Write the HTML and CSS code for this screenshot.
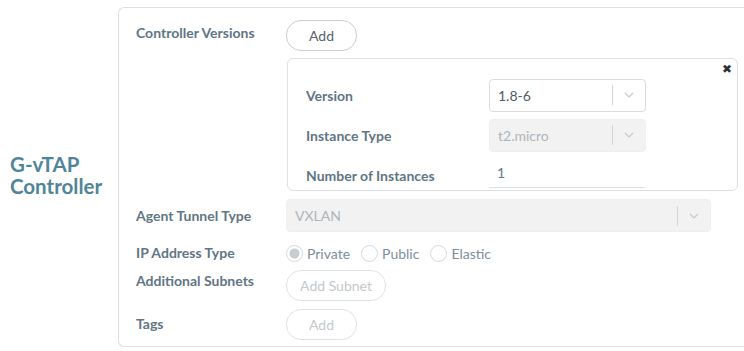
FILE: index.html
```html
<!DOCTYPE html>
<html>
<head>
<meta charset="utf-8">
<link rel="stylesheet" href="styles.css">
</head>
<body>
<div class="page">
  <div class="side">
    <h2 class="title">G-vTAP<br>Controller</h2>
  </div>
  <div class="card">
    <div class="row row-cv">
      <div class="label">Controller Versions</div>
      <div class="value">
        <button class="pill pill-add">Add</button>
        <div class="inner">
          <span class="close">&#x2716;</span>
          <div class="irow">
            <div class="ilabel">Version</div>
            <div class="select">
              <span class="sval">1.8-6</span>
              <span class="sep"></span>
              <svg class="chev" width="10" height="6" viewBox="0 0 10 6"><path d="M1 1 L5 5 L9 1" fill="none" stroke="#c4c9cd" stroke-width="1.2"/></svg>
            </div>
          </div>
          <div class="irow">
            <div class="ilabel">Instance Type</div>
            <div class="select disabled">
              <span class="sval">t2.micro</span>
              <span class="sep"></span>
              <svg class="chev" width="10" height="6" viewBox="0 0 10 6"><path d="M1 1 L5 5 L9 1" fill="none" stroke="#c4c9cd" stroke-width="1.2"/></svg>
            </div>
          </div>
          <div class="irow">
            <div class="ilabel">Number of Instances</div>
            <div class="numinput">1</div>
          </div>
        </div>
      </div>
    </div>
    <div class="row row-att">
      <div class="label">Agent Tunnel Type</div>
      <div class="value">
        <div class="select disabled wide">
          <span class="sval">VXLAN</span>
          <span class="sep"></span>
          <svg class="chev" width="10" height="6" viewBox="0 0 10 6"><path d="M1 1 L5 5 L9 1" fill="none" stroke="#c4c9cd" stroke-width="1.2"/></svg>
        </div>
      </div>
    </div>
    <div class="row row-ip">
      <div class="label">IP Address Type</div>
      <div class="value radios">
        <span class="radio checked"></span><span class="rtext">Private</span>
        <span class="radio"></span><span class="rtext">Public</span>
        <span class="radio"></span><span class="rtext">Elastic</span>
      </div>
    </div>
    <div class="row row-sub">
      <div class="label">Additional Subnets</div>
      <div class="value"><button class="pill pill-dis pill-subnet">Add Subnet</button></div>
    </div>
    <div class="row row-tags">
      <div class="label">Tags</div>
      <div class="value"><button class="pill pill-dis pill-add">Add</button></div>
    </div>
  </div>
</div>
</body>
</html>
```

FILE: styles.css
```css
* { box-sizing: border-box; }
html, body { margin: 0; padding: 0; background: #fff; overflow: hidden; }
body { font-family: "Lato", "Open Sans", sans-serif; width: 744px; height: 351px; }
.page { display: flex; align-items: flex-start; width: 744px; }
.side { width: 118px; flex: none; height: 351px; display: flex; align-items: center; padding-left: 10px; }
.title { margin: 0; font-size: 20.5px; line-height: 22px; font-weight: 700; color: #4f8598; padding-bottom: 2px; }
.card {
  margin-top: 7px;
  width: 626px;
  flex: none;
  height: 340px;
  border: 1px solid #dedfe0;
  border-right: none;
  border-radius: 6px 0 0 6px;
  padding: 12px 0 0 17px;
}
.row { display: flex; align-items: flex-start; }
.label { width: 150px; flex: none; font-size: 14px; font-weight: 700; color: #617584; line-height: 18px; }
.value { flex: none; }
.row-cv .label { padding-top: 4px; }
.pill {
  display: block;
  border: 1px solid #c9cdd0;
  border-radius: 15px;
  background: #fff;
  font-family: inherit;
  font-size: 14px;
  color: #56636d;
  height: 31px;
  padding: 0;
}
.pill-add { width: 71px; }
.pill-subnet { width: 100px; }
.pill-dis { border-color: #dfe2e4; color: #c3c9cd; }
.inner {
  position: relative;
  margin-top: 7px;
  margin-left: 1px;
  width: 451px;
  height: 133px;
  border: 1px solid #dedfe0;
  border-radius: 6px;
  padding: 20px 0 0 18px;
}
.close { position: absolute; right: 5px; top: 3px; font-size: 12px; color: #2b2f33; font-family: "DejaVu Sans", sans-serif; font-weight: 700; }
.irow { display: flex; align-items: center; height: 32px; margin-bottom: 8px; }
.ilabel { width: 183px; flex: none; font-size: 14px; font-weight: 700; color: #617584; }
.select {
  display: flex; align-items: center;
  width: 157px; height: 33px;
  border: 1px solid #dadcde; border-radius: 4px;
  background: #fff;
  padding-left: 8px;
}
.select.disabled { background: #f2f2f2; border-color: #efefef; }
.select.wide { width: 425px; }
.sval { flex: 1; font-size: 14px; color: #4f5b64; }
.select.disabled .sval { color: #aeb5ba; }
.sep { width: 1px; height: 20px; background: #d3d6d8; }
.chev { margin: 0 11px 0 11px; }
.numinput {
  width: 156px; height: 26px; margin-top: 0;
  border-bottom: 1px solid #dcdfe1;
  padding-left: 8px; padding-top: 2px;
  font-size: 14px; color: #5d7789;
}
.row-att { margin-top: 8px; height: 33px; align-items: center; }
.row-ip { margin-top: 7px; height: 28px; align-items: center; }
.radios { display: flex; align-items: center; }
.radio { width: 17px; height: 17px; border-radius: 50%; border: 1px solid #d5d9dc; background: #fff; margin-right: 4px; flex: none; }
.radio.checked { background: radial-gradient(circle, #c9cdd0 0 4.5px, #fff 5.5px); }
.rtext { font-size: 14px; color: #7d8f9b; margin-right: 11px; }
.row-sub { margin-top: 3px; }
.row-sub .label { padding-top: 2px; }
.row-tags { margin-top: 8px; }
.row-tags .label { padding-top: 6px; }
```
